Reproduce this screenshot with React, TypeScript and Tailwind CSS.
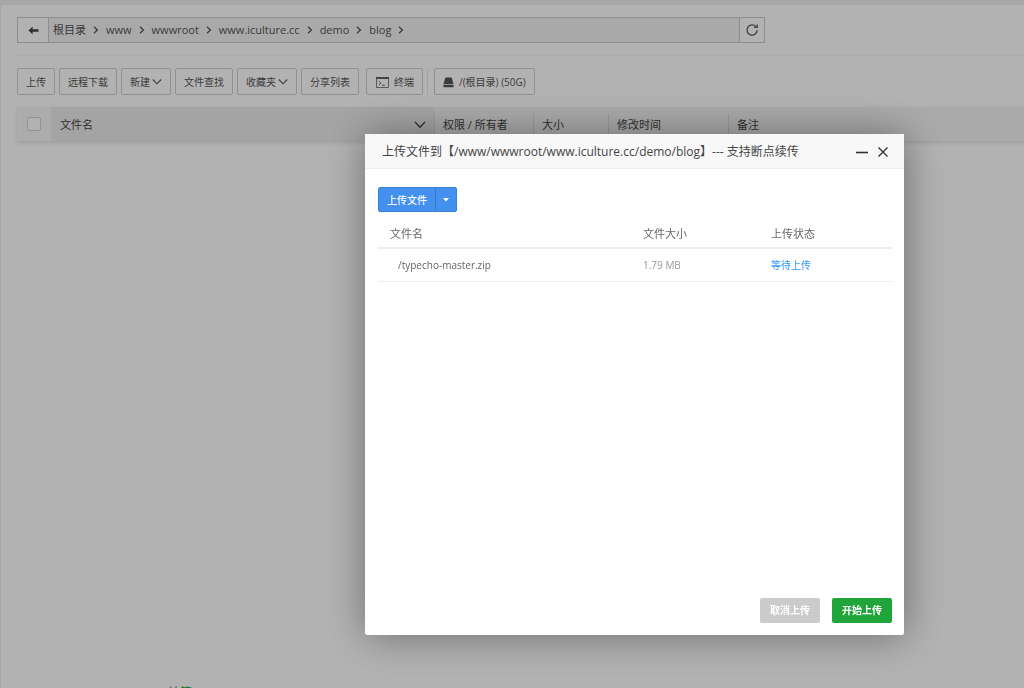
import type { ReactNode } from 'react';

const crumbs = ['根目录', 'www', 'wwwroot', 'www.iculture.cc', 'demo', 'blog'];

const files = [{ name: '/typecho-master.zip', size: '1.79 MB', status: '等待上传' }];

function Chevron({ className }: { className: string }) {
  return (
    <svg
      viewBox="0 0 12 12"
      className={className}
      fill="none"
      stroke="currentColor"
      strokeWidth="1.3"
      aria-hidden="true"
    >
      <path d="M1 3 6 8.2 11 3" />
    </svg>
  );
}

function ToolButton({ children }: { children: ReactNode }) {
  return (
    <button
      type="button"
      className="flex h-[27px] items-center whitespace-nowrap rounded-xs border border-[#cfcfcf] bg-white px-2 pt-px text-[10px] text-[#555]"
    >
      {children}
    </button>
  );
}

function PathBar() {
  return (
    <div className="flex h-[26px] w-[748px] max-w-full border border-[#cacaca]">
      <button
        type="button"
        aria-label="返回上一级"
        className="flex w-[31px] items-center justify-center border-r border-[#cacaca] bg-white text-[#444]"
      >
        <svg viewBox="0 0 12 10" className="h-[9px] w-[11px]" fill="currentColor" aria-hidden="true">
          <path d="M0.5 5 5 0.5V3.6H11.5V6.4H5V9.5Z" />
        </svg>
      </button>
      <nav aria-label="路径" className="flex flex-1 items-center bg-[#f2f2f2] pl-1 text-[11px] text-[#555]">
        {crumbs.map((c) => (
          <span key={c} className="flex items-center">
            <a href="#">{c}</a>
            <svg
              viewBox="0 0 6 8"
              className="mx-[7px] h-2 w-[6px]"
              fill="none"
              stroke="currentColor"
              strokeWidth="1.3"
              aria-hidden="true"
            >
              <path d="M1 0.8 4.4 4 1 7.2" />
            </svg>
          </span>
        ))}
      </nav>
      <button
        type="button"
        aria-label="刷新"
        className="flex w-[25px] items-center justify-center border-l border-[#cacaca] bg-white text-[#555]"
      >
        <svg
          viewBox="0 0 14 14"
          className="size-[14px]"
          fill="none"
          stroke="currentColor"
          strokeWidth="1.3"
          aria-hidden="true"
        >
          <path d="M12.2 7.4A5.1 5.1 0 1 1 10.9 3.6" />
          <path d="M12.2 1.4V4.4H9.2" />
        </svg>
      </button>
    </div>
  );
}

function Toolbar() {
  return (
    <div className="flex items-center gap-1">
      <ToolButton>上传</ToolButton>
      <ToolButton>远程下载</ToolButton>
      <ToolButton>
        新建
        <Chevron className="ml-[2px] size-[10px]" />
      </ToolButton>
      <ToolButton>文件查找</ToolButton>
      <ToolButton>
        收藏夹
        <Chevron className="ml-[2px] size-[10px]" />
      </ToolButton>
      <ToolButton>分享列表</ToolButton>
      <div className="ml-[3px] flex items-center gap-1 border-r border-[#e8e8e8] pr-1">
        <ToolButton>
          <svg
            viewBox="0 0 14 12"
            className="ml-px mr-[5px] h-[11px] w-[13px]"
            fill="none"
            stroke="currentColor"
            aria-hidden="true"
          >
            <rect x="0.5" y="0.5" width="13" height="11" strokeWidth="0.8" />
            <path d="M0.5 1.2H13.5" strokeWidth="1.8" />
            <path d="M3 4.5 5.2 6.6 3 8.7M6.5 9H9.5" />
          </svg>
          终端
        </ToolButton>
      </div>
      <div className="ml-[2px]">
        <ToolButton>
          <svg viewBox="0 0 12 12" className="mr-[5px] size-[11px]" fill="currentColor" aria-hidden="true">
            <path d="M3.2 0.6H8.8Q9.4 0.6 9.6 1.2L11.5 8H0.5L2.4 1.2Q2.6 0.6 3.2 0.6Z" />
            <path d="M0.5 8.8H11.5V10.6Q11.5 11.2 10.9 11.2H1.1Q0.5 11.2 0.5 10.6Z" />
          </svg>
          /(根目录) (50G)
        </ToolButton>
      </div>
    </div>
  );
}

function HeadCell({ children, className }: { children: ReactNode; className: string }) {
  return (
    <th className={`p-0 align-bottom font-normal ${className}`}>
      <div className="h-[27px] border-l border-[#dcdcdc] pl-2 text-left leading-[22px]">{children}</div>
    </th>
  );
}

function FileTable() {
  return (
    <table className="w-full table-fixed border-collapse bg-[#f4f4f4] text-[11px] text-[#444] shadow-[0_2px_4px_rgba(0,0,0,0.12)]">
      <thead>
        <tr className="h-[34px]">
          <th className="w-[34px] bg-[#f6f6f6] p-0">
            <input
              type="checkbox"
              aria-label="全选"
              className="mx-auto block size-[14px] appearance-none rounded-xs border border-[#d0d0d0] bg-white"
            />
          </th>
          <th className="w-[383px] bg-[#ebebeb] p-0 pt-[2px] font-normal">
            <div className="flex items-center justify-between pl-[9px] pr-2">
              文件名
              <Chevron className="size-3" />
            </div>
          </th>
          <HeadCell className="w-[99px]">权限 / 所有者</HeadCell>
          <HeadCell className="w-[75px]">大小</HeadCell>
          <HeadCell className="w-[120px]">修改时间</HeadCell>
          <HeadCell className="w-auto">备注</HeadCell>
        </tr>
      </thead>
    </table>
  );
}

function UploadDialog() {
  return (
    <section
      role="dialog"
      aria-labelledby="upload-title"
      className="fixed left-[365px] top-[134px] flex h-[501px] w-[539px] flex-col rounded-xs bg-white shadow-[1px_1px_42px_rgba(0,0,0,0.4)]"
    >
      <header className="flex h-[35px] shrink-0 items-center border-b border-[#eee] bg-[#f8f8f8] pl-[17px] pr-[15px] pt-[2px]">
        <h2 id="upload-title" className="flex-1 whitespace-nowrap text-[12px] text-[#444]">
          上传文件到【/www/wwwroot/www.iculture.cc/demo/blog】--- 支持断点续传
        </h2>
        <button type="button" aria-label="最小化" className="mr-[9px] text-[#2e2d3c]">
          <svg viewBox="0 0 12 12" className="size-3" stroke="currentColor" strokeWidth="1.6" aria-hidden="true">
            <path d="M0 6.5H12" />
          </svg>
        </button>
        <button type="button" aria-label="关闭" className="text-[#2e2d3c]">
          <svg viewBox="0 0 12 12" className="size-3" stroke="currentColor" strokeWidth="1.3" aria-hidden="true">
            <path d="M1.5 1.5 10.5 10.5M10.5 1.5 1.5 10.5" />
          </svg>
        </button>
      </header>

      <div className="flex-1 pl-[13px] pr-3 pt-[18px]">
        <div className="flex h-[25px] w-[79px] rounded-xs border border-[#3a82d0] bg-[#4490ee] text-white">
          <button type="button" className="flex-1 border-r border-[#3a78c0] pt-px text-[10px] font-medium">
            上传文件
          </button>
          <button type="button" aria-label="更多上传方式" className="flex w-5 items-center justify-center pt-px">
            <svg viewBox="0 0 6 4" className="h-1 w-[6px]" fill="currentColor" aria-hidden="true">
              <path d="M0 0H6L3 3.5Z" />
            </svg>
          </button>
        </div>

        <table className="w-full table-fixed border-collapse text-left text-[11px] text-[#666]">
          <thead>
            <tr className="h-[36px] border-b-2 border-[#eee]">
              <th className="p-0 pt-[10px] pl-3 font-normal">文件名</th>
              <th className="w-32 p-0 pt-[10px] font-normal">文件大小</th>
              <th className="w-[121px] p-0 pt-[10px] font-normal">上传状态</th>
            </tr>
          </thead>
          <tbody>
            {files.map((f) => (
              <tr key={f.name} className="h-[33px] border-b border-[#eee] text-[10px]">
                <td className="p-0 pl-5 pt-[2px]">{f.name}</td>
                <td className="p-0 pt-[2px] text-[#999]">{f.size}</td>
                <td className="p-0 pt-[2px] text-[#2d96ff]">{f.status}</td>
              </tr>
            ))}
          </tbody>
        </table>
      </div>

      <footer className="flex justify-end gap-3 px-3 pb-3 text-[10px] font-bold text-white">
        <button type="button" className="h-[25px] w-[60px] rounded-xs bg-[#cbcbcb]">
          取消上传
        </button>
        <button type="button" className="h-[25px] w-[60px] rounded-xs bg-[#20a53a]">
          开始上传
        </button>
      </footer>
    </section>
  );
}

export default function App() {
  return (
    <div className="font-['Open_Sans','Noto_Sans_CJK_SC',sans-serif]">
      <main className="flex h-screen flex-col overflow-hidden border-l border-t-[5px] border-l-[#ececec] border-t-[#f0f0f0] bg-white pl-4">
        <div className="pt-3">
          <PathBar />
        </div>
        <div className="mt-3 border-t border-[#f6f6f6] pt-3">
          <Toolbar />
        </div>
        <div className="mt-3 flex-1">
          <FileTable />
        </div>
        <div className="h-[3px] pl-[151px] text-[12px] leading-4 text-[#777]">
          计<a href="#" className="text-[#20a53a]">算</a>
        </div>
      </main>
      <div className="fixed inset-0 bg-black/30" />
      <UploadDialog />
    </div>
  );
}
